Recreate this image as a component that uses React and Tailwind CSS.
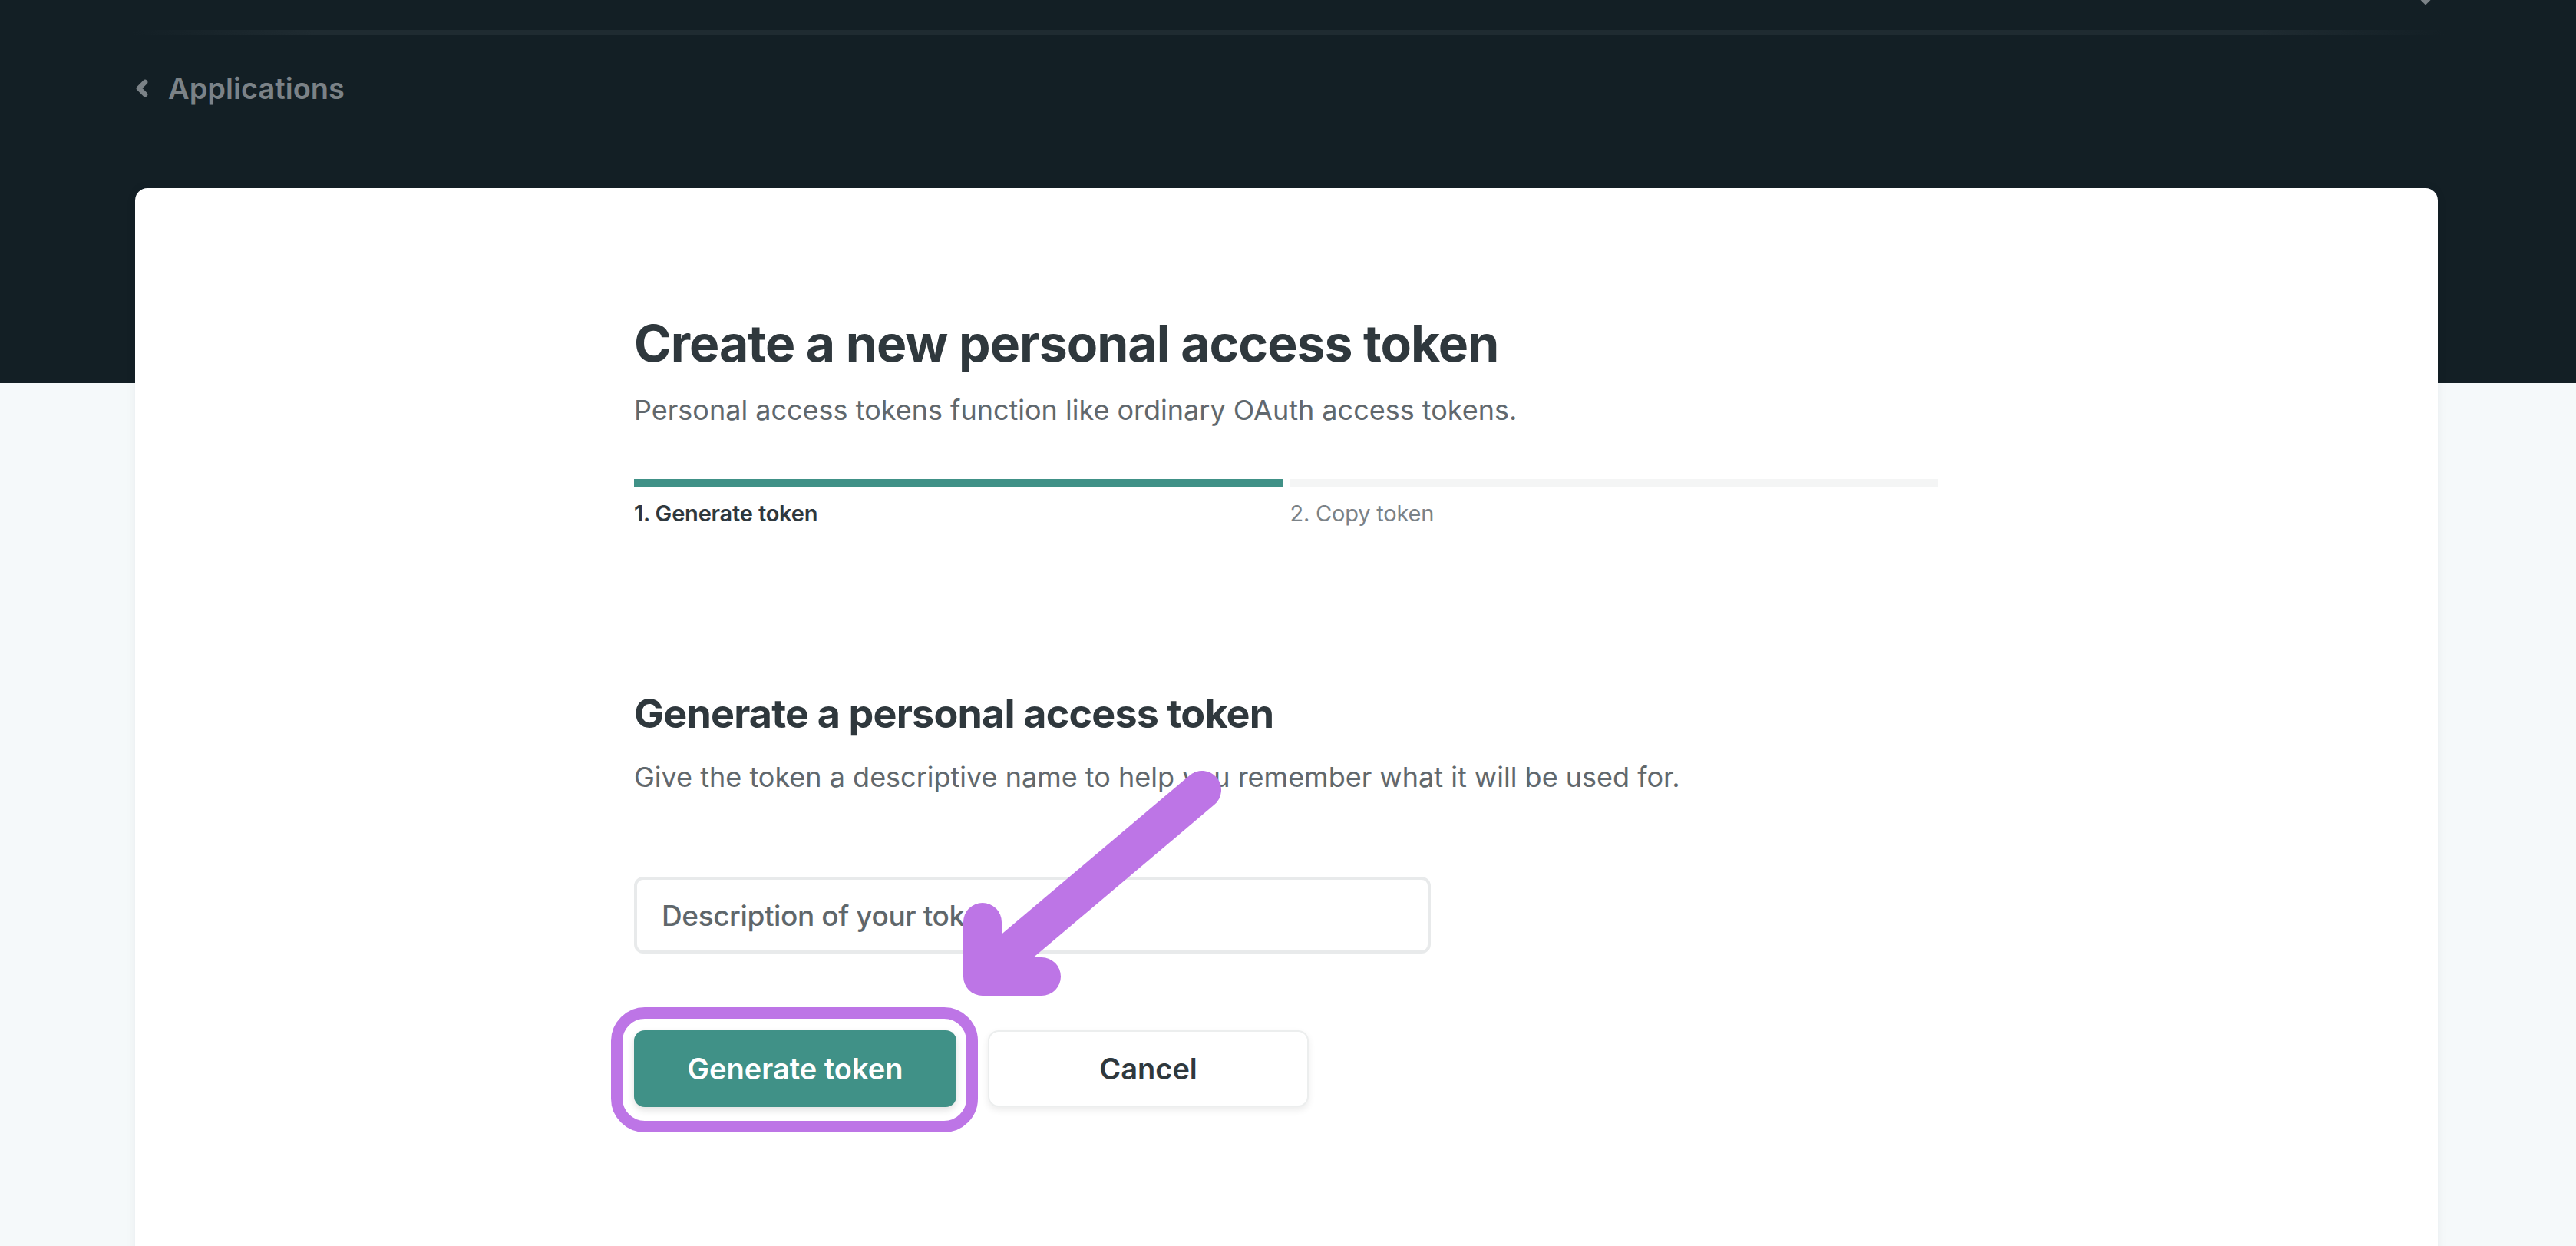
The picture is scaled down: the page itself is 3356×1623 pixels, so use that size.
import { ChevronLeft } from "lucide-react";

const font = { fontFamily: "Inter, 'Noto Sans', sans-serif" };

function Header() {
  return (
    <div>
      {/* top strip with the cut-off caret */}
      <div className="flex h-[39px] justify-end pr-[190px]">
        <div className="-mt-[8px] h-[12px] w-[12px] rotate-45 bg-[#7b8287]" />
      </div>
      <div className="mx-[171px] h-[6px] bg-[linear-gradient(to_right,transparent,#1f2b31_8%,#1f2b31_92%,transparent)]" />
      <a href="#" className="mt-[51px] ml-[176px] flex items-center gap-[18px] text-[38px] leading-none font-semibold text-[#7b8287]">
        <ChevronLeft className="h-[32px] w-[32px] -ml-[7px]" strokeWidth={5} />
        Applications
      </a>
    </div>
  );
}

function Steps() {
  return (
    <div className="mt-[72px] grid grid-cols-2 gap-[10px]">
      <div>
        <div className="h-[10px] bg-[#409187]" />
        <p className="mt-[20px] text-[29px] leading-none font-semibold tracking-[-0.2px] text-[#2f383d]">1. Generate token</p>
      </div>
      <div>
        <div className="h-[10px] bg-[#f4f5f5]" />
        <p className="mt-[20px] text-[29px] leading-none tracking-[-0.2px] text-[#7b8287]">2. Copy token</p>
      </div>
    </div>
  );
}

function Annotation() {
  return (
    <svg className="pointer-events-none absolute left-0 top-0" width="3356" height="1623">
      <g fill="none" stroke="#bd75e6" strokeWidth="50" strokeLinecap="round" strokeLinejoin="round">
        <path d="M1566 1029 L1290 1262" />
        <path d="M1280 1201 L1280 1272 L1357 1272" />
      </g>
    </svg>
  );
}

export default function App() {
  return (
    <div
      className="relative min-h-[1623px] overflow-hidden bg-[linear-gradient(to_bottom,#131f25_499px,#f5f9fa_499px)]"
      style={font}
    >
      <Header />

      <div className="mt-[111px] ml-[176px] min-h-[1400px] w-[3000px] rounded-t-[16px] bg-white pt-[169px] pl-[650px] shadow-[0_0_14px_rgba(20,40,50,0.06)]">
        <div className="w-[1699px]">
          <h1 className="text-[66px] leading-none font-bold tracking-[-1px] text-[#2f383d]">
            Create a new personal access token
          </h1>
          <p className="mt-[36px] text-[36px] leading-none text-[#61686d]">
            Personal access tokens function like ordinary OAuth access tokens.
          </p>

          <Steps />

          <h2 className="mt-[221px] text-[52px] leading-none font-bold tracking-[-0.8px] text-[#2f383d]">
            Generate a personal access token
          </h2>
          <p className="mt-[38px] text-[36px] leading-none text-[#61686d]">
            Give the token a descriptive name to help you remember what it will be used for.
          </p>

          <input
            type="text"
            placeholder="Description of your token"
            className="mt-[112px] block h-[100px] w-[1038px] rounded-[12px] border-[4px] border-[#e8eaeb] bg-white px-[32px] text-[37px] font-medium tracking-[-0.4px] text-[#2f383d] placeholder:text-[#5f676b] outline-none"
          />

          <div className="mt-[100px] flex gap-[41px]">
            <div className="relative">
              <button className="h-[100px] w-[420px] rounded-[14px] bg-[#409187] text-[38px] font-semibold text-white shadow-[0_4px_10px_rgba(0,0,0,0.12)]">
                Generate token
              </button>
              <div className="pointer-events-none absolute -top-[30px] -left-[30px] -right-[28px] -bottom-[33px] rounded-[44px] border-[15px] border-[#bd75e6]" />
            </div>
            <button className="h-[100px] w-[418px] rounded-[14px] border-[2px] border-[#eceeee] bg-white text-[38px] font-semibold text-[#2f383d] shadow-[0_4px_10px_rgba(0,0,0,0.08)]">
              Cancel
            </button>
          </div>
        </div>
      </div>

      <Annotation />
    </div>
  );
}
